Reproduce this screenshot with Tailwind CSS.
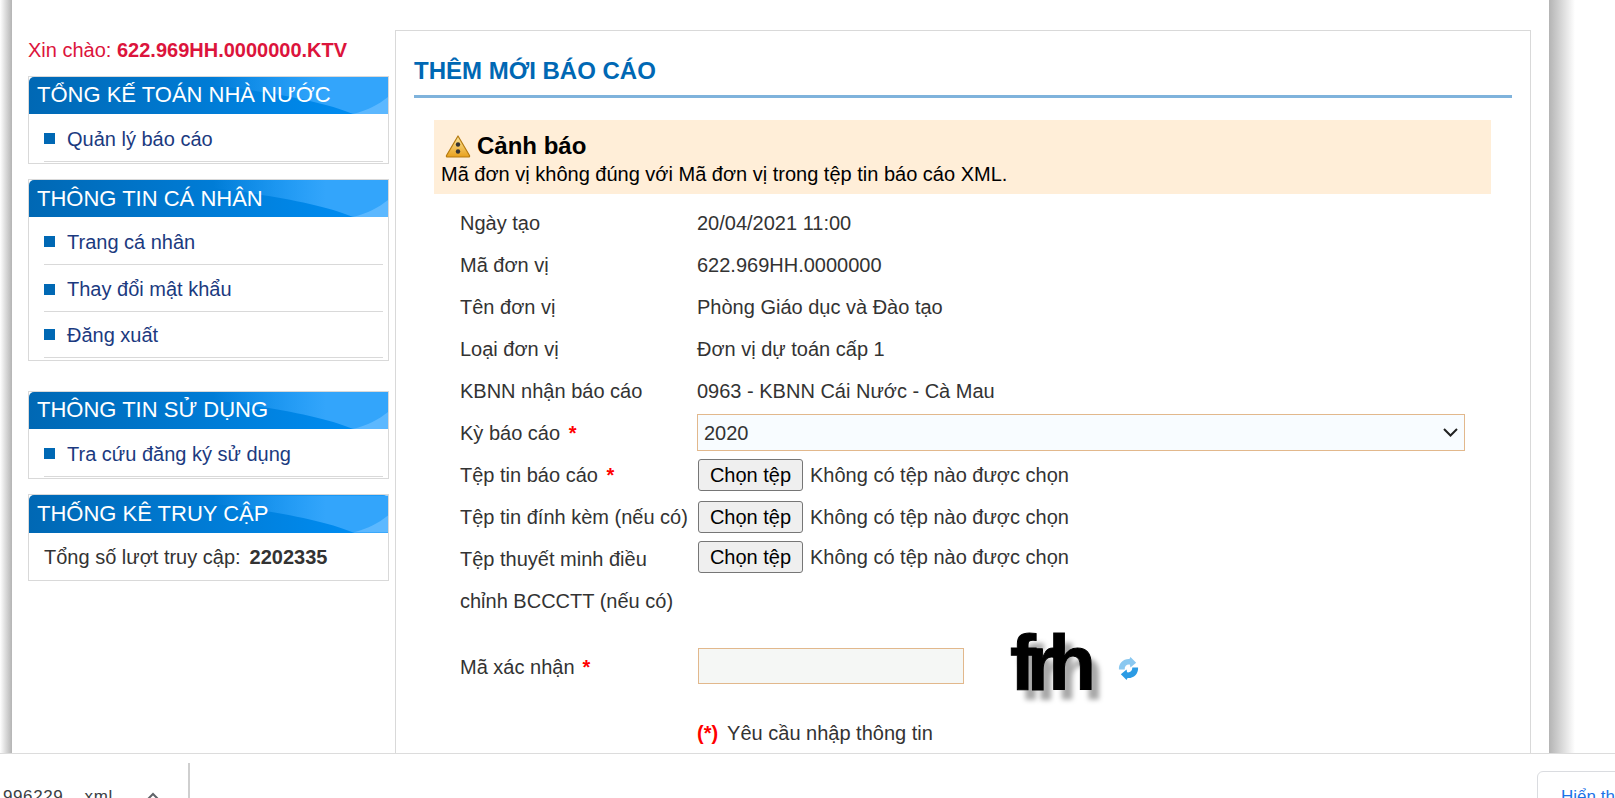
<!DOCTYPE html>
<html lang="vi">
<head>
    <meta charset="UTF-8">
    <meta name="viewport" content="width=device-width, initial-scale=1.0">
    <script src="https://cdn.jsdelivr.net/npm/@tailwindcss/browser@4"></script>
    <title>Thêm mới báo cáo</title>
</head>
<body class="h-[798px] overflow-hidden bg-white font-['Liberation_Sans',Arial,sans-serif] text-[20px] text-[#333]">
    <svg class="absolute size-0">
        <defs>
            <linearGradient id="swoosh" x1="0" x2="1" y1="0" y2="0">
                <stop offset="0.3" stop-color="#33a5fb" stop-opacity="0"/>
                <stop offset="0.75" stop-color="#33a5fb"/>
            </linearGradient>
            <linearGradient id="gold" x1="0" x2="0" y1="0" y2="1">
                <stop offset="0" stop-color="#fbe7a0"/>
                <stop offset="1" stop-color="#e8a01c"/>
            </linearGradient>
            <symbol id="panel-bg" viewBox="0 0 360 37">
                <path d="M110 0 C190 8 280 18 325 37 L360 37 L360 0 Z" fill="url(#swoosh)"/>
                <path d="M325 37 C340 33 350 28 360 20 L360 37 Z" fill="#5cb8ff"/>
            </symbol>
        </defs>
    </svg>

    <div class="flex h-[753px] overflow-hidden">
        <div class="w-[12px] shrink-0 bg-gradient-to-r from-white to-[#b4b4b4]"></div>

        <div class="flex w-[1537px] shrink-0 bg-white pl-[16px] pt-[30px]">
            <!-- menu trái -->
            <div class="w-[361px] shrink-0">
                <p class="mb-[14px] mt-[8px] h-[24px] leading-[24px] text-[#dc143c]">Xin chào: <b>622.969HH.0000000.KTV</b></p>

                <div class="mb-[15px] border border-[#d9d9d9]">
                    <div class="relative h-[37px] rounded-t-[5px] bg-gradient-to-r from-[#0068b4] to-[#0090f8] pl-[8px] text-[22px] leading-[36px] text-white">
                        <svg class="absolute left-0 top-0 h-full w-full"><use href="#panel-bg"/></svg>
                        <span class="relative">TỔNG KẾ TOÁN NHÀ NƯỚC</span>
                    </div>
                    <ul class="pb-px pl-[15px] pr-[5px] text-[#1b3a80]">
                        <li class="flex h-[48px] items-center gap-[12px] border-b border-[#d9d9d9] pt-[2px]"><i class="size-[11px] bg-[#0068b4]"></i>Quản lý báo cáo</li>
                    </ul>
                </div>

                <div class="mb-[30px] border border-[#d9d9d9]">
                    <div class="relative h-[37px] rounded-t-[5px] bg-gradient-to-r from-[#0068b4] to-[#0090f8] pl-[8px] text-[22px] leading-[38px] text-white">
                        <svg class="absolute left-0 top-0 h-full w-full"><use href="#panel-bg"/></svg>
                        <span class="relative">THÔNG TIN CÁ NHÂN</span>
                    </div>
                    <ul class="pb-[2px] pl-[15px] pr-[5px] text-[#1b3a80]">
                        <li class="flex h-[48px] items-center gap-[12px] border-b border-[#d9d9d9] pt-[2px]"><i class="size-[11px] bg-[#0068b4]"></i>Trang cá nhân</li>
                        <li class="flex h-[47px] items-center gap-[12px] border-b border-[#d9d9d9] pt-[2px]"><i class="size-[11px] bg-[#0068b4]"></i>Thay đổi mật khẩu</li>
                        <li class="flex h-[46px] items-center gap-[12px] border-b border-[#d9d9d9]"><i class="size-[11px] bg-[#0068b4]"></i>Đăng xuất</li>
                    </ul>
                </div>

                <div class="mb-[15px] border border-[#d9d9d9]">
                    <div class="relative h-[37px] rounded-t-[5px] bg-gradient-to-r from-[#0068b4] to-[#0090f8] pl-[8px] text-[22px] leading-[36px] text-white">
                        <svg class="absolute left-0 top-0 h-full w-full"><use href="#panel-bg"/></svg>
                        <span class="relative">THÔNG TIN SỬ DỤNG</span>
                    </div>
                    <ul class="pb-px pl-[15px] pr-[5px] text-[#1b3a80]">
                        <li class="flex h-[48px] items-center gap-[12px] border-b border-[#d9d9d9] pt-[2px]"><i class="size-[11px] bg-[#0068b4]"></i>Tra cứu đăng ký sử dụng</li>
                    </ul>
                </div>

                <div class="border border-[#d9d9d9]">
                    <div class="relative h-[38px] rounded-t-[5px] bg-gradient-to-r from-[#0068b4] to-[#0090f8] pl-[8px] text-[22px] leading-[38px] text-white">
                        <svg class="absolute left-0 top-0 h-full w-full"><use href="#panel-bg"/></svg>
                        <span class="relative">THỐNG KÊ TRUY CẬP</span>
                    </div>
                    <p class="flex h-[47px] items-center gap-[9px] pl-[15px]">Tổng số lượt truy cập: <b>2202335</b></p>
                </div>
            </div>

            <!-- nội dung -->
            <div class="ml-[6px] h-[740px] w-[1136px] shrink-0 border border-[#d9d9d9] px-[18px]">
                <h1 class="h-[67px] border-b-[3px] border-[#7fb3dc] pt-[24px] text-[24px] font-bold leading-[32px] text-[#0068b4]">THÊM MỚI BÁO CÁO</h1>

                <div class="ml-[20px] mr-[21px] mt-[22px] h-[74px] bg-[#ffeed8] pl-[7px] pt-[12px] text-black">
                    <div class="flex h-[27px] items-center gap-[6px] text-[24px] font-bold">
                        <svg class="ml-[4px] h-[24px] w-[26px]" viewBox="0 0 26 24">
                            <path d="M13 2 L24.5 21.5 Q25 23 23.5 23 L2.5 23 Q1 23 1.5 21.5 Z" fill="url(#gold)" stroke="#b57a10" stroke-width="1.2" stroke-linejoin="round"/>
                            <circle cx="13" cy="10.5" r="2.2" fill="#333"/>
                            <circle cx="13" cy="17.5" r="2.2" fill="#333"/>
                        </svg>
                        Cảnh báo
                    </div>
                    <p class="mt-[3px] leading-[24px]">Mã đơn vị không đúng với Mã đơn vị trong tệp tin báo cáo XML.</p>
                </div>

                <form class="ml-[46px] mt-[8px] grid grid-cols-[237px_1fr] leading-[42px]">
                    <span>Ngày tạo</span><span>20/04/2021 11:00</span>
                    <span>Mã đơn vị</span><span>622.969HH.0000000</span>
                    <span>Tên đơn vị</span><span>Phòng Giáo dục và Đào tạo</span>
                    <span>Loại đơn vị</span><span>Đơn vị dự toán cấp 1</span>
                    <span>KBNN nhận báo cáo</span><span>0963 - KBNN Cái Nước - Cà Mau</span>

                    <span>Kỳ báo cáo <b class="ml-[3px] font-bold text-[#f00]">*</b></span>
                    <div class="relative flex h-[42px] items-center">
                        <select class="mb-px h-[37px] w-[768px] appearance-none border border-[#e2b88c] bg-[#f8fcff] pl-[6px] text-[20px] leading-normal text-[#333]">
                            <option>2020</option>
                        </select>
                        <svg class="pointer-events-none absolute left-[746px] top-[16px] h-[9px] w-[15px]" viewBox="0 0 15 9" fill="none" stroke="#222" stroke-width="2"><path d="M1 1 L7.5 7.5 L14 1"/></svg>
                    </div>

                    <span>Tệp tin báo cáo <b class="ml-[3px] font-bold text-[#f00]">*</b></span>
                    <div class="flex h-[42px] items-center gap-[7px]">
                        <button type="button" class="ml-px h-[32px] w-[105px] rounded-[3px] border border-[#767676] bg-[#efefef] leading-[26px] text-black">Chọn tệp</button>
                        <span>Không có tệp nào được chọn</span>
                    </div>

                    <span>Tệp tin đính kèm (nếu có)</span>
                    <div class="flex h-[42px] items-center gap-[7px]">
                        <button type="button" class="ml-px h-[32px] w-[105px] rounded-[3px] border border-[#767676] bg-[#efefef] leading-[26px] text-black">Chọn tệp</button>
                        <span>Không có tệp nào được chọn</span>
                    </div>

                    <span class="w-[225px]">Tệp thuyết minh điều chỉnh BCCCTT (nếu có)</span>
                    <div class="flex h-[38px] items-center gap-[7px]">
                        <button type="button" class="ml-px h-[32px] w-[105px] rounded-[3px] border border-[#767676] bg-[#efefef] leading-[26px] text-black">Chọn tệp</button>
                        <span>Không có tệp nào được chọn</span>
                    </div>

                    <span class="flex h-[90px] items-center">Mã xác nhận <b class="ml-[8px] font-bold text-[#f00]">*</b></span>
                    <div class="flex h-[90px] items-center">
                        <input type="text" class="mb-[2px] ml-px h-[36px] w-[266px] border border-[#e2b88c] bg-[#f5f7f5]">
                        <span class="mb-[8px] ml-[46px] w-[88px] text-[78px] font-bold leading-[60px] tracking-[-9px] text-black blur-[0.6px] [-webkit-text-stroke:1px_black] [text-shadow:8px_10px_5px_#a8a8a8]">frh</span>
                        <svg class="ml-[19px] mt-[2px] size-[23px]" viewBox="0 0 24 24">
                            <path d="M2 13 C1.5 6 7 1.5 13 2 L14 0 L20 6 L14 11 L13.5 8 C10 7.5 8 9.5 8 13 Z" fill="#8ac8f0"/>
                            <path d="M22 11 C22.5 18 17 22.5 11 22 L10 24 L4 18 L10 13 L10.5 16 C14 16.5 16 14.5 16 11 Z" fill="#2b9be4"/>
                        </svg>
                    </div>

                    <span></span>
                    <p><b class="font-bold text-[#f00]">(*)</b><span class="ml-[9px]">Yêu cầu nhập thông tin</span></p>
                </form>
            </div>
        </div>

        <div class="w-[26px] shrink-0 bg-gradient-to-r from-[#b4b4b4] to-white"></div>
    </div>

    <!-- thanh tải xuống của trình duyệt -->
    <div class="flex h-[45px] overflow-hidden border-t border-[#dcdcdc] bg-white text-[17px] text-[#3c4043]">
        <span class="ml-[3px] mt-[33px] w-[115px] shrink-0 leading-[20px] tracking-[0.6px]">996229....xml</span>
        <svg class="ml-[28px] mt-[38px] h-[9px] w-[14px] shrink-0" viewBox="0 0 14 9" fill="none" stroke="#5f6368" stroke-width="2"><path d="M1 8 L7 2 L13 8"/></svg>
        <div class="ml-[28px] mt-[9px] h-[40px] w-[2px] shrink-0 bg-[#cfcfcf]"></div>
        <div class="ml-[1347px] mt-[17px] h-[60px] w-[120px] shrink-0 whitespace-nowrap rounded-[6px] border border-[#dadce0] pl-[23px] pt-[12px] text-[#1a73e8]">Hiển thị tất cả</div>
    </div>
</body>
</html>
